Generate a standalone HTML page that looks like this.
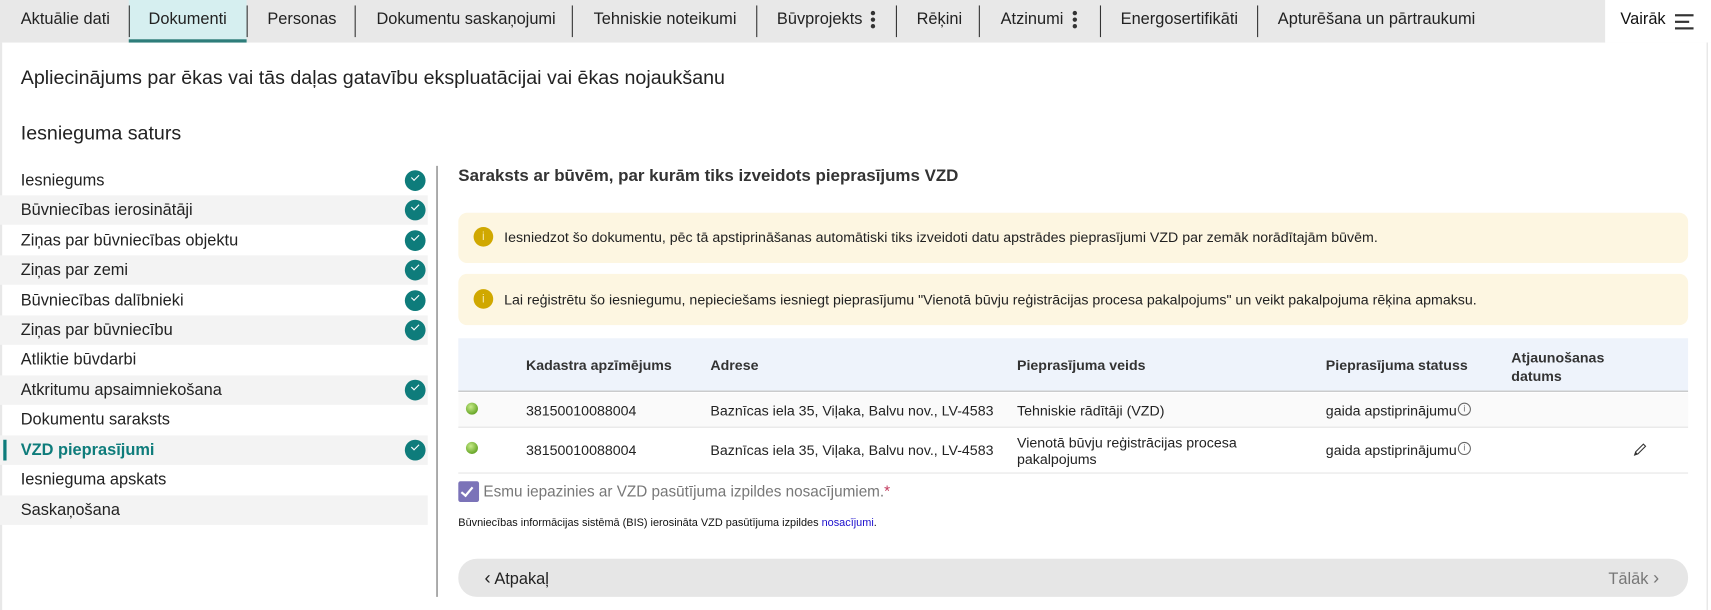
<!DOCTYPE html>
<html><head><meta charset="utf-8"><style>
*{box-sizing:border-box;margin:0;padding:0}
body{width:1711px;height:609px;overflow:hidden;background:#fff;font-family:"Liberation Sans",sans-serif;color:#222;position:relative}
#w{position:absolute;left:0;top:0;width:1568px;height:558px;transform:scale(1.0912);transform-origin:0 0}
.abs{position:absolute;white-space:nowrap}
.tabs{position:absolute;left:0;top:0;width:1568px;height:39px;background:#e8e8e8}
.tab{position:absolute;top:0;height:39px;line-height:36px;font-size:15px;color:#222;white-space:nowrap}
.sep{position:absolute;top:5px;width:1px;height:29px;background:#333}
.dots{display:inline-block;width:4px;vertical-align:middle;margin-left:8px}
.dots i{display:block;width:4px;height:4px;border-radius:2px;background:#333;margin:2px 0}
.side{position:absolute;left:0;width:392px;height:27px;font-size:15px;line-height:27px;padding-left:19px;white-space:nowrap}
.side.g{background:#f3f3f3}
.chk{position:absolute;left:371px;top:4px;width:19px;height:19px;border-radius:50%;background:#0e7c7b}
.chk:after{content:"";position:absolute;left:6px;top:4px;width:6px;height:3px;border-left:1.6px solid #fff;border-bottom:1.6px solid #fff;transform:rotate(-45deg)}
.alert{position:absolute;left:420px;width:1127px;background:#fdf6e1;border-radius:8px;font-size:13px}
.ic{position:absolute;left:14px;width:18px;height:18px;border-radius:50%;background:#d0a800;color:#f7e9a8;font-size:11px;text-align:center;line-height:18px}
.th{position:absolute;font-size:13px;font-weight:bold;color:#333;white-space:nowrap}
.td{position:absolute;font-size:13px;color:#222;white-space:nowrap}
.dot{position:absolute;left:427px;width:11px;height:11px;border-radius:50%;background:radial-gradient(circle at 40% 35%,#c8ec8a,#6aa82a 70%,#4b7f1c)}
.info{display:inline-block;width:12px;height:12px;border:1px solid #666;border-radius:50%;font-size:8px;line-height:10px;text-align:center;vertical-align:top;color:#666;margin-left:1px}
</style></head><body><div id="w">
<div class="tabs">
<div class="tab" style="left:19px">Aktuālie dati</div>
<div class="tab" style="left:118px;width:108px;background:#d6eff0;border-bottom:3px solid #2e7d7a;text-align:center">Dokumenti</div>
<div class="sep" style="left:118px"></div><div class="sep" style="left:226px"></div>
<div class="tab" style="left:245px">Personas</div>
<div class="sep" style="left:325px"></div>
<div class="tab" style="left:345px">Dokumentu saskaņojumi</div>
<div class="sep" style="left:524px"></div>
<div class="tab" style="left:544px">Tehniskie noteikumi</div>
<div class="sep" style="left:693px"></div>
<div class="tab" style="left:712px">Būvprojekts<span class="dots"><i></i><i></i><i></i></span></div>
<div class="sep" style="left:821px"></div>
<div class="tab" style="left:840px">Rēķini</div>
<div class="sep" style="left:897px"></div>
<div class="tab" style="left:917px">Atzinumi<span class="dots"><i></i><i></i><i></i></span></div>
<div class="sep" style="left:1008px"></div>
<div class="tab" style="left:1027px">Energosertifikāti</div>
<div class="sep" style="left:1152px"></div>
<div class="tab" style="left:1171px">Apturēšana un pārtraukumi</div>
<div style="position:absolute;left:1471px;top:0;width:97px;height:39px;background:#fff"></div>
<div class="tab" style="left:1485px;color:#111">Vairāk</div>
<div style="position:absolute;left:1535px;top:13px;width:17px;height:1.5px;background:#333"></div>
<div style="position:absolute;left:1535px;top:19px;width:13px;height:1.5px;background:#333"></div>
<div style="position:absolute;left:1535px;top:25px;width:17px;height:1.5px;background:#333"></div>
</div>
<div style="position:absolute;left:0;top:39px;width:2px;height:520px;background:#e8e8e8"></div>
<div style="position:absolute;left:1564px;top:39px;width:1px;height:520px;background:#e0e0e0"></div>
<div class="abs" style="left:19px;top:61px;font-size:18px;color:#222">Apliecinājums par ēkas vai tās daļas gatavību ekspluatācijai vai ēkas nojaukšanu</div>
<div class="abs" style="left:19px;top:112px;font-size:18px;color:#222">Iesnieguma saturs</div>

<div class="side" style="top:152px">Iesniegums<span class="chk"></span></div>
<div class="side g" style="top:179px">Būvniecības ierosinātāji<span class="chk"></span></div>
<div class="side" style="top:207px">Ziņas par būvniecības objektu<span class="chk"></span></div>
<div class="side g" style="top:234px">Ziņas par zemi<span class="chk"></span></div>
<div class="side" style="top:262px">Būvniecības dalībnieki<span class="chk"></span></div>
<div class="side g" style="top:289px">Ziņas par būvniecību<span class="chk"></span></div>
<div class="side" style="top:316px">Atliktie būvdarbi</div>
<div class="side g" style="top:344px">Atkritumu apsaimniekošana<span class="chk"></span></div>
<div class="side" style="top:371px">Dokumentu saraksts</div>
<div class="side g" style="top:399px;color:#0e7c7b;font-weight:bold">VZD pieprasījumi<span class="chk"></span></div>
<div style="position:absolute;left:3px;top:403px;width:3px;height:19px;background:#0e7c7b"></div>
<div class="side" style="top:426px">Iesnieguma apskats</div>
<div class="side g" style="top:454px">Saskaņošana</div>
<div style="position:absolute;left:400px;top:152px;width:1px;height:395px;background:#666"></div>

<div class="abs" style="left:420px;top:153px;font-size:15.5px;font-weight:bold;color:#333">Saraksts ar būvēm, par kurām tiks izveidots pieprasījums VZD</div>
<div class="alert" style="top:195px;height:46px"><div class="ic" style="top:13px">i</div><div class="abs" style="left:42px;top:15px">Iesniedzot šo dokumentu, pēc tā apstiprināšanas automātiski tiks izveidoti datu apstrādes pieprasījumi VZD par zemāk norādītajām būvēm.</div></div>
<div class="alert" style="top:251px;height:47px"><div class="ic" style="top:14px">i</div><div class="abs" style="left:42px;top:16px">Lai reģistrētu šo iesniegumu, nepieciešams iesniegt pieprasījumu "Vienotā būvju reģistrācijas procesa pakalpojums" un veikt pakalpojuma rēķina apmaksu.</div></div>

<div style="position:absolute;left:420px;top:310px;width:1127px;height:49px;background:#eef3fb;border-bottom:1px solid #bbb"></div>
<div class="th" style="left:482px;top:327px">Kadastra apzīmējums</div>
<div class="th" style="left:651px;top:327px">Adrese</div>
<div class="th" style="left:932px;top:327px">Pieprasījuma veids</div>
<div class="th" style="left:1215px;top:327px">Pieprasījuma statuss</div>
<div class="th" style="left:1385px;top:319px;line-height:17px">Atjaunošanas<br>datums</div>
<div style="position:absolute;left:420px;top:360px;width:1127px;height:32px;background:#fafafa;border-bottom:1px solid #e4e4e4"></div>
<div style="position:absolute;left:420px;top:433px;width:1127px;height:1px;background:#e4e4e4"></div>
<div class="dot" style="top:369px"></div>
<div class="td" style="left:482px;top:369px">38150010088004</div>
<div class="td" style="left:651px;top:369px">Baznīcas iela 35, Viļaka, Balvu nov., LV-4583</div>
<div class="td" style="left:932px;top:369px">Tehniskie rādītāji (VZD)</div>
<div class="td" style="left:1215px;top:369px">gaida apstiprinājumu<span class="info">i</span></div>
<div class="dot" style="top:405px"></div>
<div class="td" style="left:482px;top:405px">38150010088004</div>
<div class="td" style="left:651px;top:405px">Baznīcas iela 35, Viļaka, Balvu nov., LV-4583</div>
<div class="td" style="left:932px;top:398px;line-height:15px">Vienotā būvju reģistrācijas procesa<br>pakalpojums</div>
<div class="td" style="left:1215px;top:405px">gaida apstiprinājumu<span class="info">i</span></div>
<svg style="position:absolute;left:1497px;top:406px" width="12" height="12" viewBox="0 0 12 12"><path d="M1 11 L2 8 L9 1 L11 3 L4 10 Z" fill="none" stroke="#333" stroke-width="1"/><path d="M1 11 L2 8 L4 10Z" fill="#333"/></svg>

<div style="position:absolute;left:420px;top:441px;width:19px;height:19px;background:#7b73b8;border-radius:2px"></div>
<div style="position:absolute;left:425px;top:444px;width:6px;height:11px;border-right:2.5px solid #fff;border-bottom:2.5px solid #fff;transform:rotate(40deg)"></div>
<div class="abs" style="left:443px;top:442px;font-size:14px;color:#777">Esmu iepazinies ar VZD pasūtījuma izpildes nosacījumiem.<span style="color:#c0365a">*</span></div>
<div class="abs" style="left:420px;top:474px;font-size:10px;color:#111">Būvniecības informācijas sistēmā (BIS) ierosināta VZD pasūtījuma izpildes <span style="color:#1a0dcc">nosacījumi</span>.</div>

<div style="position:absolute;left:420px;top:512px;width:1127px;height:35px;background:#e6e6e6;border-radius:17px"></div>
<div class="abs" style="left:444px;top:520px;font-size:15px;color:#222"><span style="font-size:17px">‹</span> Atpakaļ</div>
<div class="abs" style="left:1474px;top:520px;font-size:15px;color:#777">Tālāk <span style="font-size:17px">›</span></div>
</div></body></html>
